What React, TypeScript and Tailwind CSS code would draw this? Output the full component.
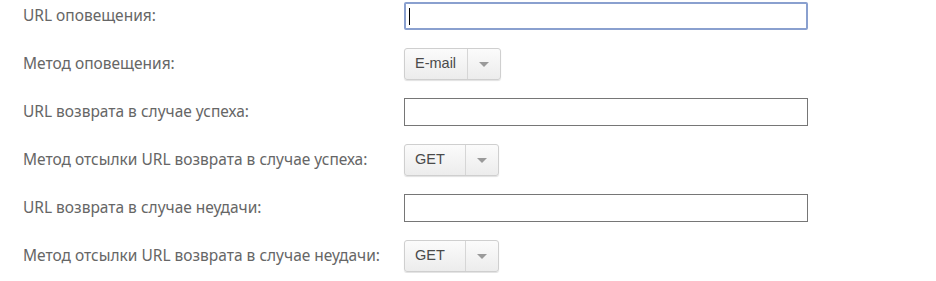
import type { ReactNode } from 'react'

function Row({ label, children }: { label: string; children: ReactNode }) {
  return (
    <div className="flex items-center h-[48px]">
      <div className="w-[404px] pl-[23px] text-[15.5px] text-[#666] font-['Noto_Sans',sans-serif]">{label}</div>
      {children}
    </div>
  )
}

function TextInput({ focused = false }: { focused?: boolean }) {
  return (
    <div
      className={
        focused
          ? 'w-[404px] h-[28px] border-2 border-[#8aa0cf] rounded-[2px] bg-white flex items-center pl-[3px]'
          : 'w-[404px] h-[28px] border border-[#767676] bg-white'
      }
    >
      {focused && <div className="w-px h-[17px] bg-black" />}
    </div>
  )
}

function Dropdown({ value, width }: { value: string; width: number }) {
  return (
    <div
      className="flex h-[32px] rounded-[3px] border border-[#cfcfcf] bg-gradient-to-b from-[#fbfbfb] to-[#ececec] shadow-[0_1px_1px_rgba(0,0,0,0.12)] font-['Liberation_Sans',Arial,sans-serif] text-[14.5px] text-[#4a4a4a]"
      style={{ width }}
    >
      <div className="flex-1 flex items-center pl-[10px]">{value}</div>
      <div className="w-[33px] border-l border-[#d6d6d6] flex items-center justify-center">
        <svg width="10" height="5" viewBox="0 0 10 5">
          <path d="M0 0 L10 0 L5 5 Z" fill="#9a9a9a" />
        </svg>
      </div>
    </div>
  )
}

export default function App() {
  return (
    <div className="w-[936px] h-[281px] bg-white">
      <div className="-mt-[8px]">
        <Row label="URL оповещения:">
          <TextInput focused />
        </Row>
        <Row label="Метод оповещения:">
          <Dropdown value="E-mail" width={97} />
        </Row>
        <Row label="URL возврата в случае успеха:">
          <TextInput />
        </Row>
        <Row label="Метод отсылки URL возврата в случае успеха:">
          <Dropdown value="GET" width={95} />
        </Row>
        <Row label="URL возврата в случае неудачи:">
          <TextInput />
        </Row>
        <Row label="Метод отсылки URL возврата в случае неудачи:">
          <Dropdown value="GET" width={95} />
        </Row>
      </div>
    </div>
  )
}
